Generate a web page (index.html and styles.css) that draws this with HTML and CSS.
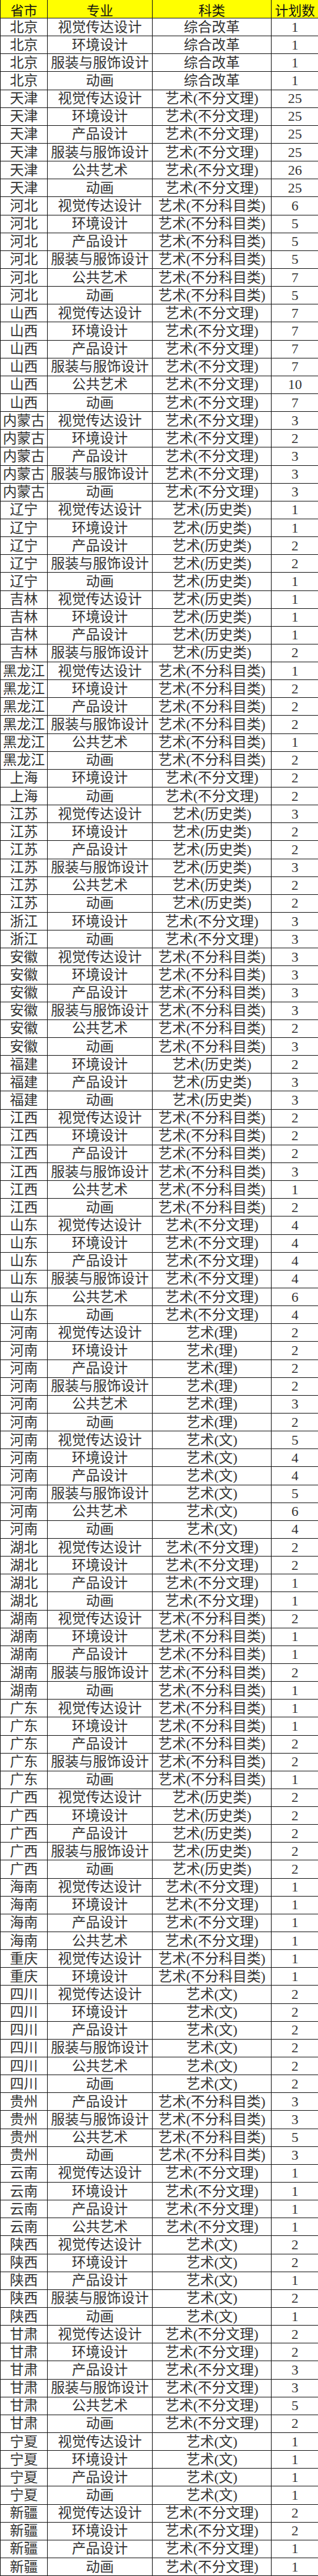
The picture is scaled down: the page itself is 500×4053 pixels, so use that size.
FILE: index.html
```html
<!DOCTYPE html>
<html lang="zh-CN">
<head>
<meta charset="utf-8">
<title>招生计划</title>
<link rel="stylesheet" href="styles.css">
</head>
<body>
<table class="plan">
<colgroup><col class="c-prov"><col class="c-major"><col class="c-type"><col class="c-num"></colgroup>
<thead>
<tr class="head"><th>省市</th><th>专业</th><th>科类</th><th>计划数</th></tr>
</thead>
<tbody>
<tr><td>北京</td><td>视觉传达设计</td><td>综合改革</td><td>1</td></tr>
<tr><td>北京</td><td>环境设计</td><td>综合改革</td><td>1</td></tr>
<tr><td>北京</td><td>服装与服饰设计</td><td>综合改革</td><td>1</td></tr>
<tr><td>北京</td><td>动画</td><td>综合改革</td><td>1</td></tr>
<tr><td>天津</td><td>视觉传达设计</td><td>艺术(不分文理)</td><td>25</td></tr>
<tr><td>天津</td><td>环境设计</td><td>艺术(不分文理)</td><td>25</td></tr>
<tr><td>天津</td><td>产品设计</td><td>艺术(不分文理)</td><td>25</td></tr>
<tr><td>天津</td><td>服装与服饰设计</td><td>艺术(不分文理)</td><td>25</td></tr>
<tr><td>天津</td><td>公共艺术</td><td>艺术(不分文理)</td><td>26</td></tr>
<tr><td>天津</td><td>动画</td><td>艺术(不分文理)</td><td>25</td></tr>
<tr><td>河北</td><td>视觉传达设计</td><td>艺术(不分科目类)</td><td>6</td></tr>
<tr><td>河北</td><td>环境设计</td><td>艺术(不分科目类)</td><td>5</td></tr>
<tr><td>河北</td><td>产品设计</td><td>艺术(不分科目类)</td><td>5</td></tr>
<tr><td>河北</td><td>服装与服饰设计</td><td>艺术(不分科目类)</td><td>5</td></tr>
<tr><td>河北</td><td>公共艺术</td><td>艺术(不分科目类)</td><td>7</td></tr>
<tr><td>河北</td><td>动画</td><td>艺术(不分科目类)</td><td>5</td></tr>
<tr><td>山西</td><td>视觉传达设计</td><td>艺术(不分文理)</td><td>7</td></tr>
<tr><td>山西</td><td>环境设计</td><td>艺术(不分文理)</td><td>7</td></tr>
<tr><td>山西</td><td>产品设计</td><td>艺术(不分文理)</td><td>7</td></tr>
<tr><td>山西</td><td>服装与服饰设计</td><td>艺术(不分文理)</td><td>7</td></tr>
<tr><td>山西</td><td>公共艺术</td><td>艺术(不分文理)</td><td>10</td></tr>
<tr><td>山西</td><td>动画</td><td>艺术(不分文理)</td><td>7</td></tr>
<tr><td>内蒙古</td><td>视觉传达设计</td><td>艺术(不分文理)</td><td>3</td></tr>
<tr><td>内蒙古</td><td>环境设计</td><td>艺术(不分文理)</td><td>2</td></tr>
<tr><td>内蒙古</td><td>产品设计</td><td>艺术(不分文理)</td><td>3</td></tr>
<tr><td>内蒙古</td><td>服装与服饰设计</td><td>艺术(不分文理)</td><td>3</td></tr>
<tr><td>内蒙古</td><td>动画</td><td>艺术(不分文理)</td><td>3</td></tr>
<tr><td>辽宁</td><td>视觉传达设计</td><td>艺术(历史类)</td><td>1</td></tr>
<tr><td>辽宁</td><td>环境设计</td><td>艺术(历史类)</td><td>1</td></tr>
<tr><td>辽宁</td><td>产品设计</td><td>艺术(历史类)</td><td>2</td></tr>
<tr><td>辽宁</td><td>服装与服饰设计</td><td>艺术(历史类)</td><td>2</td></tr>
<tr><td>辽宁</td><td>动画</td><td>艺术(历史类)</td><td>1</td></tr>
<tr><td>吉林</td><td>视觉传达设计</td><td>艺术(历史类)</td><td>1</td></tr>
<tr><td>吉林</td><td>环境设计</td><td>艺术(历史类)</td><td>1</td></tr>
<tr><td>吉林</td><td>产品设计</td><td>艺术(历史类)</td><td>1</td></tr>
<tr><td>吉林</td><td>服装与服饰设计</td><td>艺术(历史类)</td><td>2</td></tr>
<tr><td>黑龙江</td><td>视觉传达设计</td><td>艺术(不分科目类)</td><td>1</td></tr>
<tr><td>黑龙江</td><td>环境设计</td><td>艺术(不分科目类)</td><td>2</td></tr>
<tr><td>黑龙江</td><td>产品设计</td><td>艺术(不分科目类)</td><td>2</td></tr>
<tr><td>黑龙江</td><td>服装与服饰设计</td><td>艺术(不分科目类)</td><td>2</td></tr>
<tr><td>黑龙江</td><td>公共艺术</td><td>艺术(不分科目类)</td><td>1</td></tr>
<tr><td>黑龙江</td><td>动画</td><td>艺术(不分科目类)</td><td>2</td></tr>
<tr><td>上海</td><td>环境设计</td><td>艺术(不分文理)</td><td>2</td></tr>
<tr><td>上海</td><td>动画</td><td>艺术(不分文理)</td><td>2</td></tr>
<tr><td>江苏</td><td>视觉传达设计</td><td>艺术(历史类)</td><td>3</td></tr>
<tr><td>江苏</td><td>环境设计</td><td>艺术(历史类)</td><td>2</td></tr>
<tr><td>江苏</td><td>产品设计</td><td>艺术(历史类)</td><td>2</td></tr>
<tr><td>江苏</td><td>服装与服饰设计</td><td>艺术(历史类)</td><td>3</td></tr>
<tr><td>江苏</td><td>公共艺术</td><td>艺术(历史类)</td><td>2</td></tr>
<tr><td>江苏</td><td>动画</td><td>艺术(历史类)</td><td>2</td></tr>
<tr><td>浙江</td><td>环境设计</td><td>艺术(不分文理)</td><td>3</td></tr>
<tr><td>浙江</td><td>动画</td><td>艺术(不分文理)</td><td>3</td></tr>
<tr><td>安徽</td><td>视觉传达设计</td><td>艺术(不分科目类)</td><td>3</td></tr>
<tr><td>安徽</td><td>环境设计</td><td>艺术(不分科目类)</td><td>3</td></tr>
<tr><td>安徽</td><td>产品设计</td><td>艺术(不分科目类)</td><td>3</td></tr>
<tr><td>安徽</td><td>服装与服饰设计</td><td>艺术(不分科目类)</td><td>3</td></tr>
<tr><td>安徽</td><td>公共艺术</td><td>艺术(不分科目类)</td><td>2</td></tr>
<tr><td>安徽</td><td>动画</td><td>艺术(不分科目类)</td><td>3</td></tr>
<tr><td>福建</td><td>环境设计</td><td>艺术(历史类)</td><td>2</td></tr>
<tr><td>福建</td><td>产品设计</td><td>艺术(历史类)</td><td>3</td></tr>
<tr><td>福建</td><td>动画</td><td>艺术(历史类)</td><td>3</td></tr>
<tr><td>江西</td><td>视觉传达设计</td><td>艺术(不分科目类)</td><td>2</td></tr>
<tr><td>江西</td><td>环境设计</td><td>艺术(不分科目类)</td><td>2</td></tr>
<tr><td>江西</td><td>产品设计</td><td>艺术(不分科目类)</td><td>2</td></tr>
<tr><td>江西</td><td>服装与服饰设计</td><td>艺术(不分科目类)</td><td>3</td></tr>
<tr><td>江西</td><td>公共艺术</td><td>艺术(不分科目类)</td><td>1</td></tr>
<tr><td>江西</td><td>动画</td><td>艺术(不分科目类)</td><td>2</td></tr>
<tr><td>山东</td><td>视觉传达设计</td><td>艺术(不分文理)</td><td>4</td></tr>
<tr><td>山东</td><td>环境设计</td><td>艺术(不分文理)</td><td>4</td></tr>
<tr><td>山东</td><td>产品设计</td><td>艺术(不分文理)</td><td>4</td></tr>
<tr><td>山东</td><td>服装与服饰设计</td><td>艺术(不分文理)</td><td>4</td></tr>
<tr><td>山东</td><td>公共艺术</td><td>艺术(不分文理)</td><td>6</td></tr>
<tr><td>山东</td><td>动画</td><td>艺术(不分文理)</td><td>4</td></tr>
<tr><td>河南</td><td>视觉传达设计</td><td>艺术(理)</td><td>2</td></tr>
<tr><td>河南</td><td>环境设计</td><td>艺术(理)</td><td>2</td></tr>
<tr><td>河南</td><td>产品设计</td><td>艺术(理)</td><td>2</td></tr>
<tr><td>河南</td><td>服装与服饰设计</td><td>艺术(理)</td><td>2</td></tr>
<tr><td>河南</td><td>公共艺术</td><td>艺术(理)</td><td>3</td></tr>
<tr><td>河南</td><td>动画</td><td>艺术(理)</td><td>2</td></tr>
<tr><td>河南</td><td>视觉传达设计</td><td>艺术(文)</td><td>5</td></tr>
<tr><td>河南</td><td>环境设计</td><td>艺术(文)</td><td>4</td></tr>
<tr><td>河南</td><td>产品设计</td><td>艺术(文)</td><td>4</td></tr>
<tr><td>河南</td><td>服装与服饰设计</td><td>艺术(文)</td><td>5</td></tr>
<tr><td>河南</td><td>公共艺术</td><td>艺术(文)</td><td>6</td></tr>
<tr><td>河南</td><td>动画</td><td>艺术(文)</td><td>4</td></tr>
<tr><td>湖北</td><td>视觉传达设计</td><td>艺术(不分文理)</td><td>2</td></tr>
<tr><td>湖北</td><td>环境设计</td><td>艺术(不分文理)</td><td>2</td></tr>
<tr><td>湖北</td><td>产品设计</td><td>艺术(不分文理)</td><td>1</td></tr>
<tr><td>湖北</td><td>动画</td><td>艺术(不分文理)</td><td>1</td></tr>
<tr><td>湖南</td><td>视觉传达设计</td><td>艺术(不分科目类)</td><td>2</td></tr>
<tr><td>湖南</td><td>环境设计</td><td>艺术(不分科目类)</td><td>1</td></tr>
<tr><td>湖南</td><td>产品设计</td><td>艺术(不分科目类)</td><td>1</td></tr>
<tr><td>湖南</td><td>服装与服饰设计</td><td>艺术(不分科目类)</td><td>2</td></tr>
<tr><td>湖南</td><td>动画</td><td>艺术(不分科目类)</td><td>1</td></tr>
<tr><td>广东</td><td>视觉传达设计</td><td>艺术(不分科目类)</td><td>1</td></tr>
<tr><td>广东</td><td>环境设计</td><td>艺术(不分科目类)</td><td>1</td></tr>
<tr><td>广东</td><td>产品设计</td><td>艺术(不分科目类)</td><td>2</td></tr>
<tr><td>广东</td><td>服装与服饰设计</td><td>艺术(不分科目类)</td><td>2</td></tr>
<tr><td>广东</td><td>动画</td><td>艺术(不分科目类)</td><td>1</td></tr>
<tr><td>广西</td><td>视觉传达设计</td><td>艺术(历史类)</td><td>2</td></tr>
<tr><td>广西</td><td>环境设计</td><td>艺术(历史类)</td><td>2</td></tr>
<tr><td>广西</td><td>产品设计</td><td>艺术(历史类)</td><td>2</td></tr>
<tr><td>广西</td><td>服装与服饰设计</td><td>艺术(历史类)</td><td>2</td></tr>
<tr><td>广西</td><td>动画</td><td>艺术(历史类)</td><td>2</td></tr>
<tr><td>海南</td><td>视觉传达设计</td><td>艺术(不分文理)</td><td>1</td></tr>
<tr><td>海南</td><td>环境设计</td><td>艺术(不分文理)</td><td>1</td></tr>
<tr><td>海南</td><td>产品设计</td><td>艺术(不分文理)</td><td>1</td></tr>
<tr><td>海南</td><td>公共艺术</td><td>艺术(不分文理)</td><td>1</td></tr>
<tr><td>重庆</td><td>视觉传达设计</td><td>艺术(不分科目类)</td><td>1</td></tr>
<tr><td>重庆</td><td>环境设计</td><td>艺术(不分科目类)</td><td>1</td></tr>
<tr><td>四川</td><td>视觉传达设计</td><td>艺术(文)</td><td>2</td></tr>
<tr><td>四川</td><td>环境设计</td><td>艺术(文)</td><td>2</td></tr>
<tr><td>四川</td><td>产品设计</td><td>艺术(文)</td><td>2</td></tr>
<tr><td>四川</td><td>服装与服饰设计</td><td>艺术(文)</td><td>2</td></tr>
<tr><td>四川</td><td>公共艺术</td><td>艺术(文)</td><td>2</td></tr>
<tr><td>四川</td><td>动画</td><td>艺术(文)</td><td>2</td></tr>
<tr><td>贵州</td><td>产品设计</td><td>艺术(不分科目类)</td><td>3</td></tr>
<tr><td>贵州</td><td>服装与服饰设计</td><td>艺术(不分科目类)</td><td>3</td></tr>
<tr><td>贵州</td><td>公共艺术</td><td>艺术(不分科目类)</td><td>5</td></tr>
<tr><td>贵州</td><td>动画</td><td>艺术(不分科目类)</td><td>3</td></tr>
<tr><td>云南</td><td>视觉传达设计</td><td>艺术(不分文理)</td><td>1</td></tr>
<tr><td>云南</td><td>环境设计</td><td>艺术(不分文理)</td><td>1</td></tr>
<tr><td>云南</td><td>产品设计</td><td>艺术(不分文理)</td><td>1</td></tr>
<tr><td>云南</td><td>公共艺术</td><td>艺术(不分文理)</td><td>1</td></tr>
<tr><td>陕西</td><td>视觉传达设计</td><td>艺术(文)</td><td>2</td></tr>
<tr><td>陕西</td><td>环境设计</td><td>艺术(文)</td><td>2</td></tr>
<tr><td>陕西</td><td>产品设计</td><td>艺术(文)</td><td>1</td></tr>
<tr><td>陕西</td><td>服装与服饰设计</td><td>艺术(文)</td><td>2</td></tr>
<tr><td>陕西</td><td>动画</td><td>艺术(文)</td><td>1</td></tr>
<tr><td>甘肃</td><td>视觉传达设计</td><td>艺术(不分文理)</td><td>2</td></tr>
<tr><td>甘肃</td><td>环境设计</td><td>艺术(不分文理)</td><td>2</td></tr>
<tr><td>甘肃</td><td>产品设计</td><td>艺术(不分文理)</td><td>3</td></tr>
<tr><td>甘肃</td><td>服装与服饰设计</td><td>艺术(不分文理)</td><td>3</td></tr>
<tr><td>甘肃</td><td>公共艺术</td><td>艺术(不分文理)</td><td>5</td></tr>
<tr><td>甘肃</td><td>动画</td><td>艺术(不分文理)</td><td>2</td></tr>
<tr><td>宁夏</td><td>视觉传达设计</td><td>艺术(文)</td><td>1</td></tr>
<tr><td>宁夏</td><td>环境设计</td><td>艺术(文)</td><td>1</td></tr>
<tr><td>宁夏</td><td>产品设计</td><td>艺术(文)</td><td>1</td></tr>
<tr><td>宁夏</td><td>动画</td><td>艺术(文)</td><td>1</td></tr>
<tr><td>新疆</td><td>视觉传达设计</td><td>艺术(不分文理)</td><td>2</td></tr>
<tr><td>新疆</td><td>环境设计</td><td>艺术(不分文理)</td><td>2</td></tr>
<tr><td>新疆</td><td>产品设计</td><td>艺术(不分文理)</td><td>1</td></tr>
<tr><td>新疆</td><td>动画</td><td>艺术(不分文理)</td><td>1</td></tr>
</tbody>
</table>
</body>
</html>
```
FILE: styles.css
```css
html, body {
  margin: 0;
  padding: 0;
  background: #ffffff;
}

.plan {
  width: 500px;
  border-collapse: collapse;
  table-layout: fixed;
  font-family: "Liberation Serif", "Noto Sans CJK SC", serif;
  font-size: 22px;
  line-height: 1;
  color: #333333;
}

.c-prov { width: 74px; }
.c-major { width: 165px; }
.c-type { width: 187px; }
.c-num { width: 74px; }

.plan tr {
  height: 28.145px;
}

.plan th,
.plan td {
  padding: 0;
  text-align: center;
  vertical-align: middle;
  white-space: nowrap;
  border: 1px solid #1a1a1a;
}

.plan th:last-child,
.plan td:last-child {
  border-right: none;
}

.plan .head th {
  background: #ffff00;
  color: #111111;
  font-family: "Noto Sans CJK SC", sans-serif;
  font-weight: 400;
  font-size: 21px;
  line-height: 26px;
  padding-top: 2px;
  border-top: none;
}
```
